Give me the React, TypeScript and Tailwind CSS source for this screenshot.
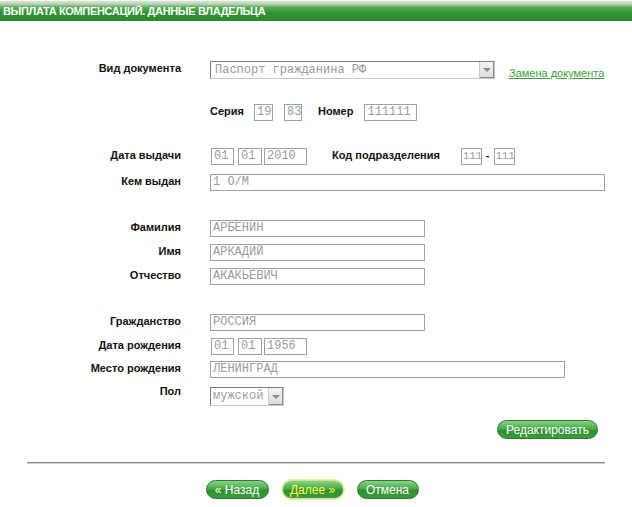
import React from "react";

const mono = "font-['Liberation_Mono','Courier_New',monospace]";

function Field({ className, value, small }: { className: string; value: string; small?: boolean }) {
  return (
    <div
      className={`h-[17px] shrink-0 overflow-hidden whitespace-nowrap border border-[#9aa2a8] bg-white pl-[2px] leading-[15px] text-[#9b9b9b] ${
        small ? "text-[11px] tracking-[-0.3px]" : "text-[12px]"
      } ${mono} ${className}`}
    >
      {value}
    </div>
  );
}

function Row({ label, className, children }: { label: string; className: string; children: React.ReactNode }) {
  return (
    <div className={`flex items-start ${className}`}>
      <div className="w-[181px] shrink-0 pt-px text-right text-[11px] font-bold leading-[13px] text-[#111]">{label}</div>
      <div className="ml-[29px] flex items-start">{children}</div>
    </div>
  );
}

function Arrow() {
  return (
    <div className="flex h-full w-[15px] items-center justify-center border-l border-[#c9c9c9] bg-[linear-gradient(to_bottom,#f4f4f4,#dcdcdc)] shadow-[inset_-1px_-1px_0_#8a8a8a]">
      <div className="h-0 w-0 border-x-[4px] border-t-[4px] border-x-transparent border-t-[#8c8c8c]" />
    </div>
  );
}

function GreenButton({ children, className, active }: { children: React.ReactNode; className: string; active?: boolean }) {
  return (
    <button
      className={`flex h-[19px] items-center justify-center rounded-full border bg-[linear-gradient(to_bottom,#86d486_0%,#4aaa4a_45%,#2f8f30_55%,#3b9c3b_100%)] text-[12px] leading-none font-['Liberation_Sans',Arial,sans-serif] ${
        active ? "border-[#cfe58a] text-[#ffff4d] shadow-[0_0_0_1px_#e3f0a8]" : "border-[#2a7a2b] text-white"
      } ${className}`}
    >
      {children}
    </button>
  );
}

export default function App() {
  return (
    <div className="h-[507px] w-[632px] overflow-hidden bg-white font-['Liberation_Sans',Arial,sans-serif]">
      <div className="flex h-[21px] items-end bg-[linear-gradient(to_bottom,#ffffff_0%,#d2dccf_8%,#b9d8b2_18%,#55ab55_35%,#2f9533_60%,#288a2c_100%)] pb-[3px] pl-[3px]">
        <span className="text-[11px] font-bold leading-[13px] tracking-[-0.35px] text-white">
          ВЫПЛАТА КОМПЕНСАЦИЙ. ДАННЫЕ ВЛАДЕЛЬЦА
        </span>
      </div>

      <Row label="Вид документа" className="mt-[40px]">
        <div className="flex h-[18px] w-[285px] border border-[#7c7c7c] border-b-[#c8c8c8] border-r-[#c8c8c8] bg-white">
          <div className={`flex-1 pl-[4px] text-[12px] leading-[16px] text-[#9b9b9b] ${mono}`}>Паспорт гражданина РФ</div>
          <Arrow />
        </div>
        <a className="ml-[14px] mt-[6px] text-[11px] leading-[13px] text-[#3d9a3d] underline">Замена документа</a>
      </Row>

      <Row label="" className="mt-[24px]">
        <span className="pt-px text-[11px] font-bold leading-[13px] text-[#111]">Серия</span>
        <Field className="ml-[10px] w-[19px]" value="19" />
        <Field className="ml-[11px] w-[18px]" value="83" />
        <span className="ml-[16px] pt-px text-[11px] font-bold leading-[13px] text-[#111]">Номер</span>
        <Field className="ml-[11px] w-[53px]" value="111111" />
      </Row>

      <Row label="Дата выдачи" className="mt-[27px]">
        <Field className="ml-px w-[23px]" value="01" />
        <Field className="ml-[4px] w-[24px]" value="01" />
        <Field className="ml-[2px] w-[43px]" value="2010" />
        <span className="ml-[25px] pt-px text-[11px] font-bold leading-[13px] text-[#111]">Код подразделения</span>
        <Field className="ml-[21px] w-[21px] pl-px" value="111" small />
        <span className="mx-[4px] pt-px text-[11px] font-bold leading-[13px] text-[#111]">-</span>
        <Field className="w-[21px] pl-px" value="111" small />
      </Row>

      <Row label="Кем выдан" className="mt-[9px]">
        <Field className="w-[395px]" value="1 О/М" />
      </Row>

      <Row label="Фамилия" className="mt-[29px]">
        <Field className="w-[215px]" value="АРБЕНИН" />
      </Row>
      <Row label="Имя" className="mt-[7px]">
        <Field className="w-[215px]" value="АРКАДИЙ" />
      </Row>
      <Row label="Отчество" className="mt-[7px]">
        <Field className="w-[215px]" value="АКАКЬЕВИЧ" />
      </Row>

      <Row label="Гражданство" className="mt-[29px]">
        <Field className="w-[215px]" value="РОССИЯ" />
      </Row>
      <Row label="Дата рождения" className="mt-[7px]">
        <Field className="ml-px w-[23px]" value="01" />
        <Field className="ml-[4px] w-[24px]" value="01" />
        <Field className="ml-[2px] w-[43px]" value="1956" />
      </Row>
      <Row label="Место рождения" className="mt-[6px]">
        <Field className="w-[355px]" value="ЛЕНИНГРАД" />
      </Row>
      <Row label="Пол" className="mt-[6px]">
        <div className="mt-[3px] flex h-[19px] w-[74px] border border-[#7c7c7c] border-b-[#c8c8c8] border-r-[#c8c8c8] bg-white">
          <div className={`flex-1 pl-[2px] text-[12px] leading-[17px] text-[#9b9b9b] ${mono}`}>мужской</div>
          <Arrow />
        </div>
      </Row>

      <div className="mt-[14px] flex justify-end pr-[34px]">
        <GreenButton className="w-[101px]">Редактировать</GreenButton>
      </div>

      <div className="mx-[27px] mt-[23px] h-px bg-[#8a8a8a] shadow-[0_1px_0_#d0d0d0]" />

      <div className="mt-[17px] flex justify-center gap-[13px] pr-[8px]">
        <GreenButton className="w-[63px]">« Назад</GreenButton>
        <GreenButton className="w-[62px]" active>
          Далее »
        </GreenButton>
        <GreenButton className="w-[62px]">Отмена</GreenButton>
      </div>
    </div>
  );
}
